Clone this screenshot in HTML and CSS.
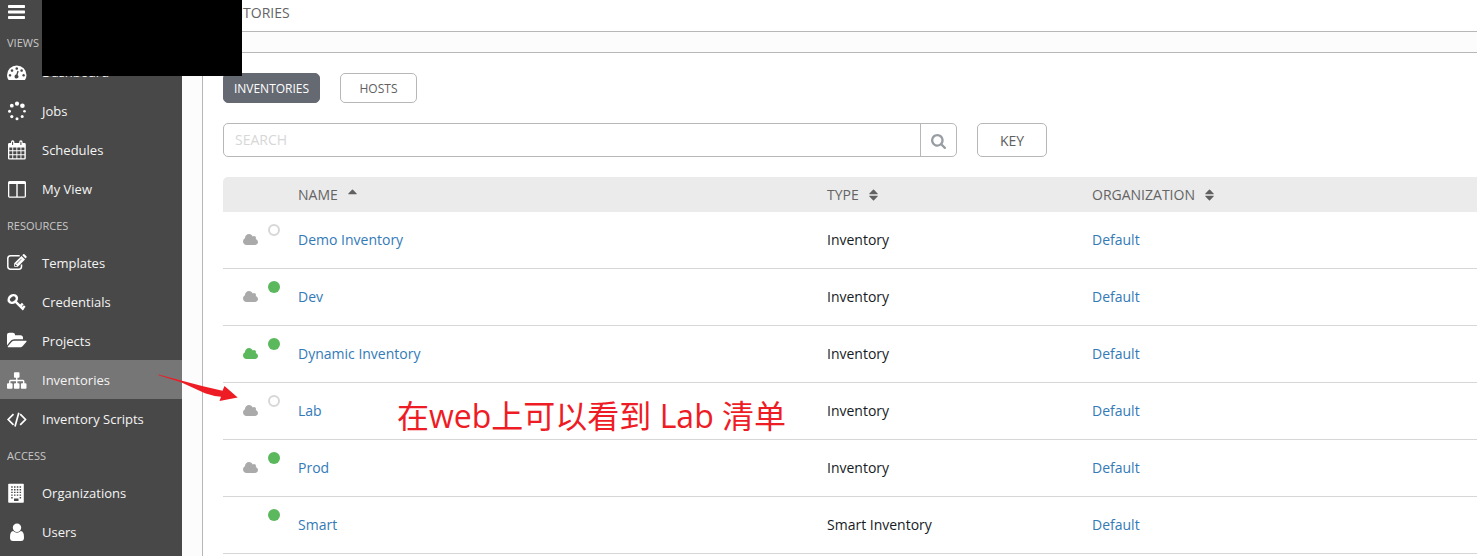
FILE: index.html
```
<!DOCTYPE html>
<html lang="en">
<head>
<meta charset="utf-8">
<title>Inventories</title>
<link rel="stylesheet" href="styles.css">
</head>
<body>
<svg class="defs" width="0" height="0" aria-hidden="true">
  <symbol id="cloud" viewBox="64 128 1920 1408"><path d="M1984 1152q0 159-112.500 271.500t-271.500 112.500h-1088q-185 0-316.500-131.500t-131.500-316.500q0-132 71-241.500t187-163.500q-2-28-2-43 0-212 150-362t362-150q158 0 286.500 88t187.500 230q70-62 166-62 106 0 181 75t75 181q0 75-41 138 129 30 213 134.500t84 239.500z"/></symbol>
  <symbol id="sort" viewBox="0 0 9 12"><path d="M.8 5.200h7.400c.6 0 .7-.5.4-.8L5 .8q-.5-.4-1 0L.4 4.400c-.3.300-.2.800.4.800zM.8 6.800h7.400c.6 0 .7.500.4.800L5 11.200q-.5.400-1 0L.4 7.600c-.3-.3-.2-.8.4-.8z"/></symbol>
</svg>
<div class="app">
  <nav class="sidebar">
    <div class="toggle"><svg class="bars" viewBox="0 0 17 14"><rect width="17" height="3" rx=".7"/><rect y="5.500" width="17" height="3" rx=".7"/><rect y="11" width="17" height="3" rx=".7"/></svg></div>
    <div class="group group-first">VIEWS</div>
    <a class="item"><svg class="icon" viewBox="0 0 20 20"><path fill-rule="evenodd" d="M1.600 18Q0 15.600 0 13.200a9.750 9.750 0 0 1 19.500 0Q19.500 15.600 17.900 18zM3 12a1.300 1.300 0 1 0 .01 0zM5 7.200a1.300 1.300 0 1 0 .01 0zM9.750 5.200a1.300 1.300 0 1 0 .01 0zM14.600 7.200a1.300 1.300 0 1 0 .01 0zM16.600 12a1.300 1.300 0 1 0 .01 0zM10.400 8.800L9.300 12.600a2 2 0 1 0 1.300.3L11.700 9.200z"/></svg><span>Dashboard</span></a>
    <a class="item"><svg class="icon" viewBox="0 0 20 20"><circle cx="10" cy="2.700" r="2.100"/><circle cx="15.400" cy="4.800" r="2.300"/><circle cx="17.500" cy="10.200" r="1.300"/><circle cx="15.200" cy="15.600" r="1.500"/><circle cx="10" cy="17.700" r="1.500"/><circle cx="4.800" cy="15.600" r="1.600"/><circle cx="2.500" cy="10.200" r="1.500"/><circle cx="4.800" cy="4.700" r="1.900"/></svg><span>Jobs</span></a>
    <a class="item"><svg class="icon" viewBox="0 0 20 20"><path fill-rule="evenodd" d="M2.400 3H4V2a1.700 1.700 0 0 1 3.400 0v1h4.800V2a1.700 1.700 0 0 1 3.400 0v1h1.800q1.400 0 1.400 1.400v13.800q0 1.400-1.400 1.400H2.400Q1 19.600 1 18.200V4.400Q1 3 2.400 3zM5.100 2v3h1V2q-.5-.7-1 0zM13.400 2v3h1V2q-.5-.7-1 0zM2.300 7.500v2.700h3V7.500zM6.200 7.500v2.700h3.200V7.500zM10.300 7.500v2.700h3.200V7.500zM14.400 7.500v2.700h3V7.500zM2.300 11.200v3.100h3v-3.100zM6.200 11.200v3.100h3.200v-3.100zM10.300 11.200v3.100h3.200v-3.100zM14.400 11.200v3.100h3v-3.100zM2.300 15.300v3h3v-3zM6.200 15.300v3h3.200v-3zM10.300 15.300v3h3.200v-3zM14.400 15.300v3h3v-3z"/></svg><span>Schedules</span></a>
    <a class="item"><svg class="icon" viewBox="0 0 20 20"><path fill-rule="evenodd" d="M2.500 2h15Q19 2 19 3.500v13.800q0 1.400-1.500 1.400h-15Q1 18.700 1 17.300V3.500Q1 2 2.500 2zM2.300 5v12.400h7V5zM10.700 5v12.400h7V5z"/></svg><span>My View</span></a>
    <div class="group">RESOURCES</div>
    <a class="item"><svg class="icon" viewBox="0 0 20 20"><path class="line" d="M12.700 2.800H3.600Q.8 2.800.8 5.600v8q0 2.700 2.800 2.700h8.200q2.700 0 2.700-2.700V11.500"/><path fill-rule="evenodd" d="M14.500 3L18 6.500l-7.200 7.200H7.200v-3.500zM15.300 2.200l.9-.9q.6-.6 1.200 0l2 2q.6.600 0 1.200l-.8.900zM8.200 11.200l-.2.200v1.500h1.600l.4-.3zM9.500 10.500l.4.400 4.800-4.800-.4-.4z"/></svg><span>Templates</span></a>
    <a class="item"><svg class="icon" viewBox="0 0 20 20"><ellipse class="key-ring" cx="5.800" cy="7" rx="4.300" ry="3.500" transform="rotate(-35 5.800 7)"/><path class="key-stem" d="M8.300 9.300l8.300 8.300M13.200 14.200l2.600-2.600M15.400 16.400l2.400-2.400"/></svg><span>Credentials</span></a>
    <a class="item"><svg class="icon" viewBox="0 160 1920 1920"><path d="M1879 1142q0 31-31 66l-336 396q-43 51-120.500 86.500t-143.500 35.500h-1088q-34 0-60.500-13t-26.500-43q0-31 31-66l336-396q43-51 120.500-86.500t143.500-35.500h1088q34 0 60.500 13t26.500 43zm-343-344v160h-832q-94 0-197 47.500t-164 119.500l-337 396-5 6q0-4-.5-12.500t-.5-12.500v-960q0-92 66-158t158-66h320q92 0 158 66t66 158v32h544q92 0 158 66t66 158z"/></svg><span>Projects</span></a>
    <a class="item active"><svg class="icon" viewBox="0 -72 1840 1840"><path d="M1792 1248v320q0 40-28 68t-68 28h-320q-40 0-68-28t-28-68v-320q0-40 28-68t68-28h96v-192h-512v192h96q40 0 68 28t28 68v320q0 40-28 68t-68 28h-320q-40 0-68-28t-28-68v-320q0-40 28-68t68-28h96v-192h-512v192h96q40 0 68 28t28 68v320q0 40-28 68t-68 28h-320q-40 0-68-28t-28-68v-320q0-40 28-68t68-28h96v-192q0-52 38-90t90-38h512v-192h-96q-40 0-68-28t-28-68v-320q0-40 28-68t68-28h320q40 0 68 28t28 68v320q0 40-28 68t-68 28h-96v192h512q52 0 90 38t38 90v192h96q40 0 68 28t28 68z"/></svg><span>Inventories</span></a>
    <a class="item"><svg class="icon" viewBox="0 0 20 20"><path class="code" d="M6.500 5.200L1.200 10.500l5.300 5.300M13.200 5.200l5.300 5.300-5.300 5.300M11.800 3.800L8 17.400"/></svg><span>Inventory Scripts</span></a>
    <div class="group">ACCESS</div>
    <a class="item"><svg class="icon" viewBox="0 0 20 20"><path d="M2 .7h14q.8 0 .8.800v17.500q0 .8-.8.800H2q-.8 0-.8-.8V1.500Q1.200.7 2 .700z"/><path class="windows" d="M4.200 4h10M4.200 6.700h10M4.200 9.400h10M4.200 12.100h10M4.200 14.700h1.500M12.600 14.700h1.500"/><path class="door" d="M7 15.500h4.500V18H7z"/></svg><span>Organizations</span></a>
    <a class="item"><svg class="icon" viewBox="0 0 20 20"><path d="M6.200 9.100Q8 10.700 10 10.700t3.800-1.600q3.200.2 3.200 6.300 0 3.500-3 3.500H6q-3 0-3-3.500 0-6.100 3.200-6.300z"/><circle cx="10" cy="5.700" r="4.200"/></svg><span>Users</span></a>
  </nav>
  <div class="content">
    <header class="crumbs">INVENTORIES</header>
    <main class="panel">
      <div class="tabs"><button class="btn selected">INVENTORIES</button><button class="btn hosts">HOSTS</button></div>
      <div class="tools">
        <div class="search"><span class="placeholder">SEARCH</span><span class="go"><svg viewBox="64 128 1664 1664"><path d="M1216 832q0-185-131.500-316.500t-316.500-131.500-316.500 131.500-131.500 316.500 131.500 316.500 316.500 131.500 316.500-131.500 131.500-316.500zm512 832q0 52-38 90t-90 38q-54 0-90-38l-343-342q-179 124-399 124-143 0-273.500-55.500t-225-150-150-225-55.500-273.500 55.500-273.500 150-225 225-150 273.500-55.500 273.500 55.500 225 150 150 225 55.500 273.500q0 220-124 399l343 343q37 37 37 90z"/></svg></span></div>
        <button class="btn key">KEY</button>
      </div>
      <div class="table">
        <div class="row head"><span></span><span class="col">NAME <svg class="sort" viewBox="0 0 9 12"><path d="M.8 5.200h7.400c.6 0 .7-.5.4-.8L5 .8q-.5-.4-1 0L.4 4.400c-.3.300-.2.800.4.800z"/></svg></span><span class="col">TYPE <svg class="sort"><use href="#sort"/></svg></span><span class="col">ORGANIZATION <svg class="sort"><use href="#sort"/></svg></span></div>
        <div class="row"><span class="status"><svg class="cloud"><use href="#cloud"/></svg><i class="dot empty"></i></span><a>Demo Inventory</a><span>Inventory</span><a>Default</a></div>
        <div class="row"><span class="status"><svg class="cloud"><use href="#cloud"/></svg><i class="dot"></i></span><a>Dev</a><span>Inventory</span><a>Default</a></div>
        <div class="row"><span class="status"><svg class="cloud synced"><use href="#cloud"/></svg><i class="dot"></i></span><a>Dynamic Inventory</a><span>Inventory</span><a>Default</a></div>
        <div class="row"><span class="status"><svg class="cloud"><use href="#cloud"/></svg><i class="dot empty"></i></span><a>Lab</a><span>Inventory</span><a>Default</a></div>
        <div class="row"><span class="status"><svg class="cloud"><use href="#cloud"/></svg><i class="dot"></i></span><a>Prod</a><span>Inventory</span><a>Default</a></div>
        <div class="row"><span class="status"><i class="dot"></i></span><a>Smart</a><span>Smart Inventory</span><a>Default</a></div>
      </div>
    </main>
  </div>
</div>
<div class="mask"></div>
<svg class="arrow" viewBox="0 0 84 32"><path d="M1.500 2.500L45 14 65.500 18.800 67.500 14 80.700 25.500 62.500 29 64 24.700Q56 24 48 21.200L24 10.200 1.500 3.300z"/></svg>
<div class="note" lang="zh-CN">在web上可以看到 Lab 清单</div>
</body>
</html>
```
FILE: styles.css
```
* { box-sizing: border-box; }
body {
  margin: 0;
  height: 556px;
  overflow: hidden;
  position: relative;
  background: #fcfcfc;
  color: #161b1f;
  font: 14px/20px "Open Sans", "Noto Sans", sans-serif;
}
.defs { position: absolute; }
.app { display: flex; height: 556px; overflow: hidden; }
.sidebar { width: 182px; flex: none; background: #484848; color: #fff; font-size: 13px; overflow: hidden; }
.toggle { height: 25px; padding: 5px 8px; }
.bars { display: block; width: 17px; height: 14px; fill: #fff; }
.group { height: 35px; padding-left: 7px; font-size: 11px; line-height: 35px; color: #c8c8c8; }
.group-first { height: 27px; }
.item { display: flex; height: 39px; padding: 10px 0 0 7px; gap: 15px; line-height: 20px; color: #f4f4f4; }
.item.active { background: #767676; }
.icon { width: 20px; height: 20px; flex: none; fill: #fff; }
.line { fill: none; stroke: #fff; stroke-width: 1.5; }
.key-ring { fill: none; stroke: #fff; stroke-width: 2.5; }
.key-stem { fill: none; stroke: #fff; stroke-width: 2.4; }
.code { fill: none; stroke: #fff; stroke-width: 1.7; }
.windows { fill: none; stroke: #484848; stroke-width: 1.4; stroke-dasharray: 1.5 1.3; }
.door { fill: #484848; }
.content { flex: 1; min-width: 0; }
.crumbs { height: 32px; padding: 3px 0 0 20px; background: #fff; border-bottom: 1px solid #b7b7b7; color: #646464; }
.panel { height: 530px; margin: 20px 0 0 20px; padding: 20px 0 0 20px; background: #fff; border: solid #b7b7b7; border-width: 1px 0 0 1px; }
.tabs { display: flex; gap: 20px; }
.btn { height: 30px; padding: 1px 0 0; border: 1px solid #b7b7b7; border-radius: 5px; background: #fff; color: #606060; font: 12px/28px "Open Sans", "Noto Sans", sans-serif; }
.selected { width: 97px; background: #646972; border-color: #646972; color: #fff; }
.hosts { width: 77px; }
.tools { display: flex; gap: 20px; margin: 20px 0; }
.search { display: flex; width: 734px; height: 34px; border: 1px solid #b7b7b7; border-radius: 5px; }
.placeholder { flex: 1; padding-left: 11px; line-height: 32px; color: #d7d7d7; }
.go { display: flex; width: 36px; padding: 10px 0 0 10px; border-left: 1px solid #b7b7b7; }
.go svg { width: 15px; height: 15px; fill: #989da3; }
.btn.key { width: 70px; height: 34px; font-size: 14px; line-height: 32px; }
.row { display: grid; grid-template-columns: 75px 529px 265px 1fr; height: 57px; border-bottom: 1px solid #d7d7d7; line-height: 56px; }
.row a { color: #337ab7; }
.row.head { height: 35px; border: 0; border-radius: 5px 0 0 0; background: #ebebeb; color: #646464; line-height: 36px; }
.col { display: flex; gap: 10px; }
.sort { width: 9px; height: 12px; margin-top: 11.5px; fill: #606060; }
.status { display: flex; padding: 12px 18px 0 20px; justify-content: flex-end; gap: 10px; }
.cloud { width: 15px; height: 11px; margin-top: 10px; fill: #aaa; }
.cloud.synced { fill: #5cb85c; }
.dot { width: 12px; height: 12px; border-radius: 50%; background: #5cb85c; }
.dot.empty { border: 2px solid #d7d7d7; background: #fff; }
.mask { position: absolute; left: 42px; top: 0; width: 200px; height: 76px; background: #000; }
.arrow { position: absolute; left: 157px; top: 372px; width: 84px; height: 32px; fill: #ee1c25; }
.note { position: absolute; left: 397px; top: 393px; color: #ee1c25; font: 32px/46px "Open Sans", "Noto Sans CJK SC", sans-serif; white-space: nowrap; }
```
